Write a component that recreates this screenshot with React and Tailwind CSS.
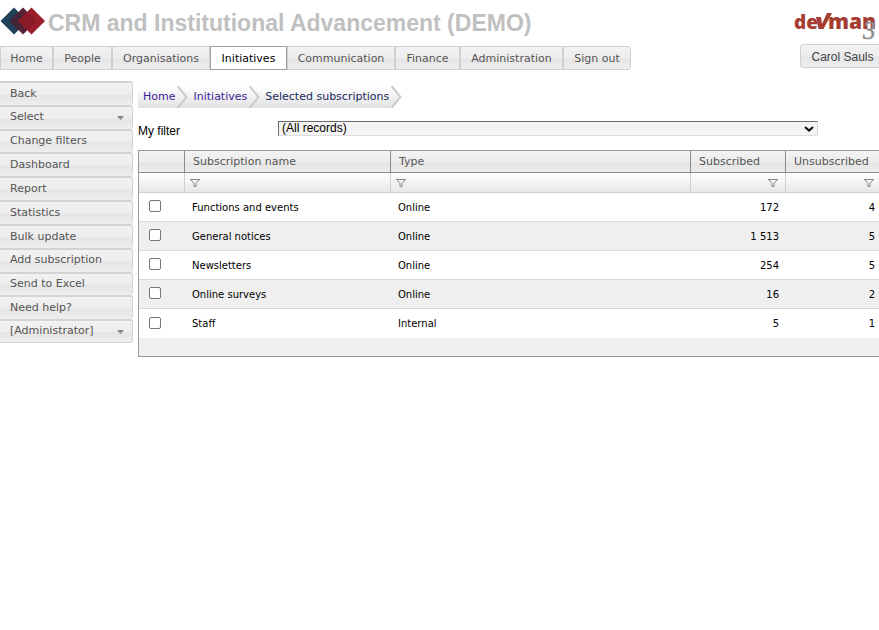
import React from "react";

const NAV = [
  ["Home", "w-[53px]"],
  ["People", "w-[59px]"],
  ["Organisations", "w-[98px]"],
  ["Initiatives", "w-[77px]"],
  ["Communication", "w-[108px]"],
  ["Finance", "w-[65px]"],
  ["Administration", "w-[103px]"],
  ["Sign out", "w-[68px]"],
];

const SIDE = [
  "Back", "Select", "Change filters", "Dashboard", "Report", "Statistics",
  "Bulk update", "Add subscription", "Send to Excel", "Need help?", "[Administrator]",
];

const ROWS = [
  ["Functions and events", "Online", "172", "4"],
  ["General notices", "Online", "1 513", "5"],
  ["Newsletters", "Online", "254", "5"],
  ["Online surveys", "Online", "16", "2"],
  ["Staff", "Internal", "5", "1"],
];

const COLUMNS = ["Subscription name", "Type", "Subscribed", "Unsubscribed"];

function Logo() {
  return (
    <svg width="46" height="28" viewBox="0 0 46 28" aria-hidden="true">
      <path d="M14 0.5 27.5 14 14 27.5 0.5 14Z" fill="#1f4258" />
      <path d="M23 0.5 36.5 14 23 27.5 9.5 14Z" fill="#562238" />
      <path d="M18.500 5 27.500 14 18.500 23 9.500 14Z" fill="#46243a" />
      <path d="M31.5 0.5 45 14 31.5 27.5 18 14Z" fill="#991f2b" />
      <path d="M27.2 4.7 36.5 14 27.2 23.3 18 14Z" fill="#8a1a27" />
    </svg>
  );
}

function Brand() {
  return (
    <svg className="overflow-visible" width="88" height="34" viewBox="0 0 88 34" role="img" aria-label="devman 3">
      <g fontFamily="'Open Sans', sans-serif" fontWeight="800" fill="#a63d33">
        <text x="0" y="20" fontSize="19">de</text>
        <path d="M22 8h5l1 7L33 4h5L29.500 20h-5z" />
        <text x="34" y="20" fontSize="21">man</text>
      </g>
      <text x="69" y="30" fontFamily="'Liberation Serif', serif" fontStyle="italic" fontSize="25" fill="#8e8e8e" stroke="#8e8e8e" strokeWidth="0.500">3</text>
    </svg>
  );
}

function Funnel() {
  return (
    <svg width="10" height="8" viewBox="0 0 10 8" fill="none" stroke="#888" aria-hidden="true">
      <path d="M0 0.500h10M1 1 4 4.500v3h2v-3L9 1" />
    </svg>
  );
}

function Caret() {
  return (
    <svg width="7" height="4" viewBox="0 0 7 4" fill="#888" aria-hidden="true">
      <path d="M0 0h7L3.500 4z" />
    </svg>
  );
}

function Crumb({ label, current }) {
  return (
    <li className="flex items-center">
      <a href="#" className={`pt-[1px] pr-[2px] pl-[5px] ${current ? "text-[#1b2a5c]" : "text-[#3d1c99]"}`}>{label}</a>
      <svg width="11" height="22" viewBox="0 0 11 22" fill="none" aria-hidden="true">
        {current && <path d="M0 0 10 11 0 22H11V0Z" fill="#fff" />}
        <path d="M0.500 0 9.500 11 0.500 22" stroke="#cbcbcb" strokeWidth="2" />
      </svg>
    </li>
  );
}

const GLOSS = "bg-[linear-gradient(#f2f2f2,#ededed_52%,#e4e4e4_53%,#eeeeee)]";
const CELL = "border-b border-[#d8d8d8] group-last:border-b-0 p-0";

export default function App() {
  return (
    <div className="min-h-screen overflow-hidden bg-white font-['DejaVu_Sans',Verdana,sans-serif] text-[11px] text-[#555]">
      <header>
        <div className="flex h-[46px] items-start justify-between">
          <div className="flex items-start">
            <div className="pt-[7px]"><Logo /></div>
            <h1 className="whitespace-nowrap pl-[2px] pt-[8px] font-['Liberation_Sans',Arial,sans-serif] text-[23px] leading-[30px] font-bold text-[#c0c0c0]">
              CRM and Institutional Advancement (DEMO)
            </h1>
          </div>
          <div className="-mr-[3px] shrink-0 pt-[9px]"><Brand /></div>
        </div>
        <div className="flex items-start justify-between">
          <nav className="flex">
            {NAV.map(([label, width]) => (
              <a
                key={label}
                href="#"
                className={`flex h-[24px] items-center justify-center whitespace-nowrap border pt-[2px] ${width} ${
                  label === "Initiatives" ? "border-[#a0a0a0] bg-white text-black" : `border-[#d0d0d0] last:rounded-r-[3px] ${GLOSS}`
                }`}
              >
                {label}
              </a>
            ))}
          </nav>
          <button type="button" className={`-mt-[2px] -mr-[6px] h-[24px] w-[85px] shrink-0 rounded-[3px] border border-[#d0d0d0] pt-[1px] font-['Liberation_Sans',Arial,sans-serif] text-[12px] text-[#444] ${GLOSS}`}>
            Carol Sauls
          </button>
        </div>
      </header>

      <div className="flex items-start pt-[11px]">
        <aside className="grid h-[262px] w-[133px] shrink-0 auto-rows-fr">
          {SIDE.map((label) => (
            <a key={label} href="#" className={`flex items-center justify-between rounded-r-[3px] border-t-2 border-r border-[#d3d3d3] pr-[8px] pl-[10px] last:border-b ${GLOSS}`}>
              {label}
              {(label === "Select" || label === "[Administrator]") && <Caret />}
            </a>
          ))}
        </aside>

        <main className="min-w-0 flex-1 pt-[5px] pl-[5px]">
          <ol className="flex h-[22px] w-fit bg-linear-to-b from-white to-[#e2e2e2]">
            <Crumb label="Home" />
            <Crumb label="Initiatives" />
            <Crumb label="Selected subscriptions" current />
          </ol>

          <div className="flex h-[42px] items-start pt-[13px] font-['Liberation_Sans',Arial,sans-serif] text-[12px] text-black">
            <label htmlFor="filter" className="w-[140px] shrink-0 pt-[2px] leading-[16px]">My filter</label>
            <div className="grid w-[540px] items-center">
              <select id="filter" className="col-start-1 row-start-1 h-[15px] w-full appearance-none border border-t-[#6b6b6b] border-r-[#ddd] border-b-[#ddd] border-l-[#6b6b6b] bg-[#f4f4f4] pl-[3px] leading-[13px]">
                <option>(All records)</option>
              </select>
              <svg className="pointer-events-none col-start-1 row-start-1 mr-[4px] justify-self-end" width="10" height="6" viewBox="0 0 10 6" fill="none" stroke="#111" strokeWidth="2" aria-hidden="true">
                <path d="M1 1 5 4.600 9 1" />
              </svg>
            </div>
          </div>

          <table className="w-full min-w-[745px] table-fixed border-separate border-spacing-0 border border-[#999] text-left">
            <colgroup>
              <col className="w-[46px]" />
              <col className="w-[206px]" />
              <col />
              <col className="w-[95px]" />
              <col className="w-[96px]" />
            </colgroup>
            <thead>
              <tr className={`h-[22px] ${GLOSS}`}>
                <td className="border-r border-b border-[#8a8a8a]" />
                {COLUMNS.map((c) => (
                  <th key={c} scope="col" className="border-r border-b border-[#8a8a8a] p-0 pt-[2px] pl-[8px] font-normal">{c}</th>
                ))}
              </tr>
              <tr className="h-[20px] bg-linear-to-b from-white to-[#e6e6e6]">
                <td className="border-r border-b border-[#d0d0d0]" />
                {COLUMNS.map((c, i) => (
                  <td key={c} className="border-r border-b border-[#d0d0d0] p-0">
                    <button type="button" aria-label={`Filter ${c}`} className={`flex w-full px-[5px] ${i > 1 ? "justify-end pr-[7px]" : ""}`}><Funnel /></button>
                  </td>
                ))}
              </tr>
            </thead>
            <tbody className="text-[10px] text-black">
              {ROWS.map(([name, type, sub, unsub]) => (
                <tr key={name} className="group h-[29px] even:bg-[#efefef]">
                  <td className={`${CELL} pb-[2px] pl-[10px]`}>
                    <input type="checkbox" aria-label={name} className="block size-[12px] appearance-none rounded-[2px] border border-[#767676] bg-white" />
                  </td>
                  <td className={`${CELL} pl-[7px]`}>{name}</td>
                  <td className={`${CELL} pl-[7px]`}>{type}</td>
                  <td className={`${CELL} pr-[7px] text-right`}>{sub}</td>
                  <td className={`${CELL} pr-[7px] text-right`}>{unsub}</td>
                </tr>
              ))}
            </tbody>
            <tfoot>
              <tr className="h-[18px] bg-[#efefef]"><td colSpan={5} className="p-0" /></tr>
            </tfoot>
          </table>
        </main>
      </div>
    </div>
  );
}
